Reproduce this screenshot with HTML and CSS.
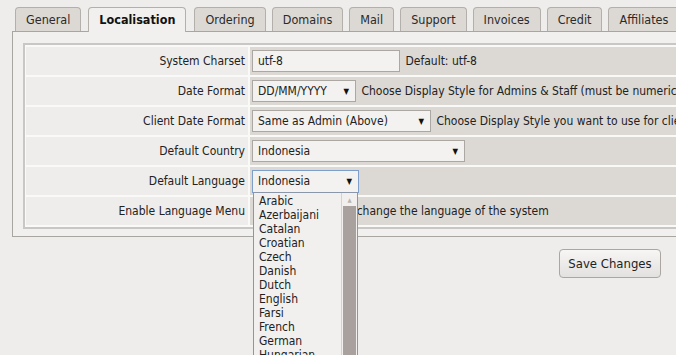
FILE: index.html
```html
<!DOCTYPE html>
<html>
<head>
    <title>General Settings</title>
    <link rel="stylesheet" href="styles.css">
</head>
<body>
    <div class="page">
        <div class="tabs">
            <div class="tab">General</div>
            <div class="tab active">Localisation</div>
            <div class="tab">Ordering</div>
            <div class="tab">Domains</div>
            <div class="tab">Mail</div>
            <div class="tab">Support</div>
            <div class="tab">Invoices</div>
            <div class="tab">Credit</div>
            <div class="tab">Affiliates</div>
        </div>

        <div class="panel">
            <table class="form-table">
                <tr>
                    <td class="label">System Charset</td>
                    <td class="field"><span class="input wide">utf-8</span> Default: utf-8</td>
                </tr>
                <tr>
                    <td class="label">Date Format</td>
                    <td class="field"><span class="select date">DD/MM/YYYY</span> Choose Display Style for Admins &amp; Staff (must be numeric format)</td>
                </tr>
                <tr>
                    <td class="label">Client Date Format</td>
                    <td class="field"><span class="select client">Same as Admin (Above)</span> Choose Display Style you want to use for clients</td>
                </tr>
                <tr>
                    <td class="label">Default Country</td>
                    <td class="field"><span class="select country">Indonesia</span></td>
                </tr>
                <tr>
                    <td class="label">Default Language</td>
                    <td class="field"><div class="dropdown"><span class="select lang focus">Indonesia</span>
                            <div class="options">
                                <div class="list">
                                    <div>Arabic</div>
                                    <div>Azerbaijani</div>
                                    <div>Catalan</div>
                                    <div>Croatian</div>
                                    <div>Czech</div>
                                    <div>Danish</div>
                                    <div>Dutch</div>
                                    <div>English</div>
                                    <div>Farsi</div>
                                    <div>French</div>
                                    <div>German</div>
                                    <div>Hungarian</div>
                                </div>
                                <div class="scrollbar">
                                    <div class="arrow">&#9650;</div>
                                    <div class="thumb"></div>
                                </div>
                            </div>
                        </div></td>
                </tr>
                <tr>
                    <td class="label">Enable Language Menu</td>
                    <td class="field"><span class="checkbox"></span> Allow clients to change the language of the system</td>
                </tr>
            </table>
        </div>

        <div class="actions">
            <button class="save">Save Changes</button>
        </div>
    </div>
</body>
</html>
```

FILE: styles.css
```css
body {
    margin: 0;
    padding: 0;
    background-color: #efedeb;
    font-family: "DejaVu Sans Condensed", "DejaVu Sans", sans-serif;
    font-stretch: condensed;
    font-size: 12px;
    color: #222;
}

.page {
    width: 676px;
    height: 355px;
    overflow: hidden;
}

.tabs {
    display: flex;
    gap: 6px;
    padding: 7px 0 0 15px;
    width: 760px;
}

.tab {
    flex: none;
    height: 23px;
    line-height: 23px;
    padding: 0 10px;
    border: 1px solid #b3afab;
    border-bottom: none;
    border-radius: 4px 4px 0 0;
    background-color: #dcd9d5;
    font-size: 12.5px;
    color: #2a2a2a;
}

.tab.active {
    background-color: #f1f0ee;
    font-weight: bold;
    color: #111;
    position: relative;
    z-index: 1;
    height: 24px;
    margin: 0 2px -1px 1px;
    padding: 0 10px;
}

.panel {
    width: 720px;
    margin-left: 12px;
    border: 1px solid #a9a5a1;
    background-color: #f1f0ee;
    padding: 11px 0 7px 10px;
}

.form-table {
    width: 100%;
    border: 2px solid #c9c7c5;
    border-spacing: 0 2px;
    background-color: #f9f9f8;
    padding: 0 1px;
}

.form-table td {
    height: 28px;
    padding: 0;
    white-space: nowrap;
}

.label {
    width: 219px;
    text-align: right;
    padding-right: 3px !important;
    background-color: #efedeb;
    border-right: 2px solid #f9f9f8;
}

.field {
    background-color: #dcd9d5;
    padding-left: 2px !important;
}

.input,
.select {
    display: inline-block;
    vertical-align: middle;
    box-sizing: border-box;
    height: 22px;
    line-height: 20px;
    padding: 0 5px;
    border: 1px solid #aba7a3;
    background-color: #f3f2f0;
    margin-right: 2px;
}

.input.wide { width: 148px; }

.select {
    position: relative;
    padding-right: 20px;
}

.select::after {
    content: "\25BC";
    position: absolute;
    right: 6px;
    top: 1px;
    font-size: 8px;
    color: #111;
}

.select.date { width: 104px; }
.select.client { width: 179px; }
.select.country { width: 213px; }
.select.lang { width: 107px; height: 23px; margin-right: 0; }

.select.focus {
    border-color: #7d9fc9;
}

.dropdown {
    position: relative;
    display: inline-block;
    vertical-align: middle;
}

.options {
    position: absolute;
    top: 22px;
    left: 1px;
    width: 105px;
    height: 175px;
    box-sizing: border-box;
    border: 1px solid #8a97aa;
    background-color: #f1f0ee;
    display: flex;
    z-index: 2;
}

.list {
    flex: 1;
    padding: 1px 0 0 5px;
    line-height: 14px;
}

.scrollbar {
    width: 15px;
    border-left: 1px solid #d4d1ce;
    display: flex;
    flex-direction: column;
}

.arrow {
    height: 13px;
    font-size: 6px;
    line-height: 13px;
    text-align: center;
    color: #b8b5b2;
}

.thumb {
    flex: 1;
    margin: 0 1px;
    background-color: #a9a19d;
}

.checkbox {
    display: inline-block;
    vertical-align: middle;
    width: 11px;
    height: 11px;
    margin-left: 3px;
    border: 1px solid #888;
    background-color: #fff;
}

.actions {
    width: 661px;
    text-align: right;
    padding-top: 12px;
}

.save {
    font-family: inherit;
    font-stretch: condensed;
    font-size: 13px;
    color: #222;
    width: 102px;
    height: 29px;
    border: 1px solid #aaa6a2;
    border-radius: 4px;
    background: linear-gradient(#f7f6f5, #e3e1df);
    cursor: pointer;
}
```
